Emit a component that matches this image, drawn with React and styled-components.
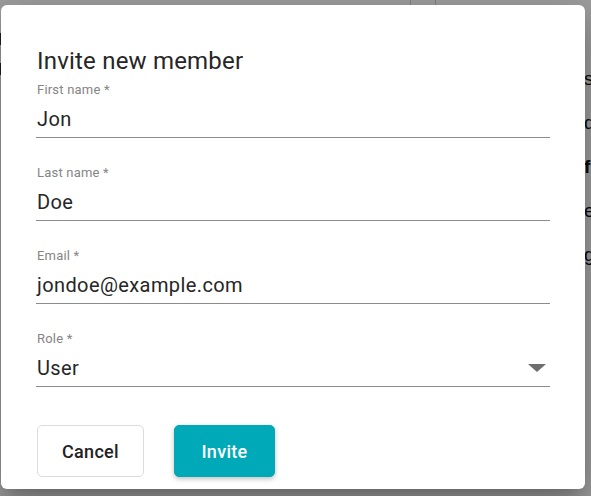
import React from "react";
import styled, { createGlobalStyle } from "styled-components";

const Global = createGlobalStyle`
  html, body { margin: 0; padding: 0; }
  body {
    width: 591px;
    height: 496px;
    overflow: hidden;
    background: #ffffff;
    font-family: Roboto, "Noto Sans", sans-serif;
  }
`;

const Page = styled.div`
  position: relative;
  width: 591px;
  height: 496px;
  overflow: hidden;
  background: #fff;
`;

const BgColumns = styled.div`
  display: flex;
  height: 6px;
  margin-left: 410px;
  gap: 24px;
`;

const BgDivider = styled.div`
  width: 1px;
  height: 6px;
  background: #d0d0d0;
`;

const BgList = styled.ul`
  list-style: none;
  margin: 0;
  padding: 0;
  position: absolute;
  left: 584px;
  top: 68px;
  display: flex;
  flex-direction: column;
  gap: 22px;
  font-family: "Liberation Sans", Arial, sans-serif;
  font-size: 19px;
  line-height: 22px;
  color: #111;
`;

const BgItem = styled.li`
  font-weight: ${(p) => (p.$bold ? 700 : 400)};
  white-space: nowrap;
`;

const BgEdge = styled.div`
  position: absolute;
  left: 0;
  top: ${(p) => p.$top}px;
  width: 3px;
  height: 12px;
  background: #333;
`;

const Backdrop = styled.div`
  position: absolute;
  inset: 0;
  background: rgba(0, 0, 0, 0.38);
`;

const Dialog = styled.div`
  position: absolute;
  left: 1px;
  top: 5px;
  width: 584px;
  height: 484px;
  box-sizing: border-box;
  background: #fff;
  border-radius: 6px;
  box-shadow: 0 11px 15px -7px rgba(0, 0, 0, 0.2),
    0 24px 38px 3px rgba(0, 0, 0, 0.14), 0 9px 46px 8px rgba(0, 0, 0, 0.12);
  padding: 40px 35px 11px 35px;
  display: flex;
  flex-direction: column;
`;

const Title = styled.h2`
  margin: 0;
  font-size: 24px;
  line-height: 32px;
  font-weight: 400;
  letter-spacing: 0.2px;
  color: #262626;
  padding-left: 1px;
`;

const Form = styled.div`
  display: flex;
  flex-direction: column;
  gap: 27px;
  margin-top: 5px;
`;

const Field = styled.label`
  display: flex;
  flex-direction: column;
`;

const Label = styled.span`
  font-size: 13px;
  line-height: 16px;
  letter-spacing: 0.2px;
  color: #858585;
  padding-left: 1px;
`;

const InputRow = styled.div`
  display: flex;
  align-items: center;
  margin-top: 7px;
  padding-bottom: 4px;
  border-bottom: 1px solid #8c8c8c;
`;

const Value = styled.span`
  flex: 1;
  font-size: 20px;
  line-height: 28px;
  letter-spacing: 0.4px;
  color: #262626;
  padding-left: 1px;
`;

const Arrow = styled.svg`
  width: 18px;
  height: 8px;
  margin-right: 4px;
  fill: #6e6e6e;
`;

const Actions = styled.div`
  display: flex;
  gap: 30px;
  margin-top: 38px;
  padding-left: 1px;
`;

const Button = styled.button`
  height: 52px;
  padding: 0;
  border-radius: 5px;
  font-family: inherit;
  font-size: 18px;
  font-weight: 500;
  letter-spacing: 0.3px;
  cursor: pointer;
  border: 1px solid ${(p) => (p.$primary ? "#00a9b8" : "#dcdcdc")};
  background: ${(p) => (p.$primary ? "#00a9b8" : "#fff")};
  color: ${(p) => (p.$primary ? "#fff" : "#222")};
  box-shadow: ${(p) =>
    p.$primary ? "0 2px 5px rgba(0,0,0,0.25)" : "none"};
  width: ${(p) => p.$w}px;
`;

const fields = [
  { label: "First name *", value: "Jon" },
  { label: "Last name *", value: "Doe" },
  { label: "Email *", value: "jondoe@example.com" },
  { label: "Role *", value: "User", select: true },
];

export default function App() {
  return (
    <>
      <Global />
      <Page>
        <BgColumns>
          <BgDivider />
          <BgDivider />
        </BgColumns>
        <BgEdge $top={33} />
        <BgEdge $top={63} />
        <BgList>
          <BgItem>settings</BgItem>
          <BgItem>details</BgItem>
          <BgItem $bold>filters</BgItem>
          <BgItem>export</BgItem>
          <BgItem>groups</BgItem>
        </BgList>
        <Backdrop />
        <Dialog role="dialog">
          <Title>Invite new member</Title>
          <Form>
            {fields.map((f) => (
              <Field key={f.label}>
                <Label>{f.label}</Label>
                <InputRow>
                  <Value>{f.value}</Value>
                  {f.select && (
                    <Arrow viewBox="0 0 18 8">
                      <path d="M0 0 L18 0 L9 8 Z" />
                    </Arrow>
                  )}
                </InputRow>
              </Field>
            ))}
          </Form>
          <Actions>
            <Button $w={107}>Cancel</Button>
            <Button $primary $w={101}>Invite</Button>
          </Actions>
        </Dialog>
      </Page>
    </>
  );
}
